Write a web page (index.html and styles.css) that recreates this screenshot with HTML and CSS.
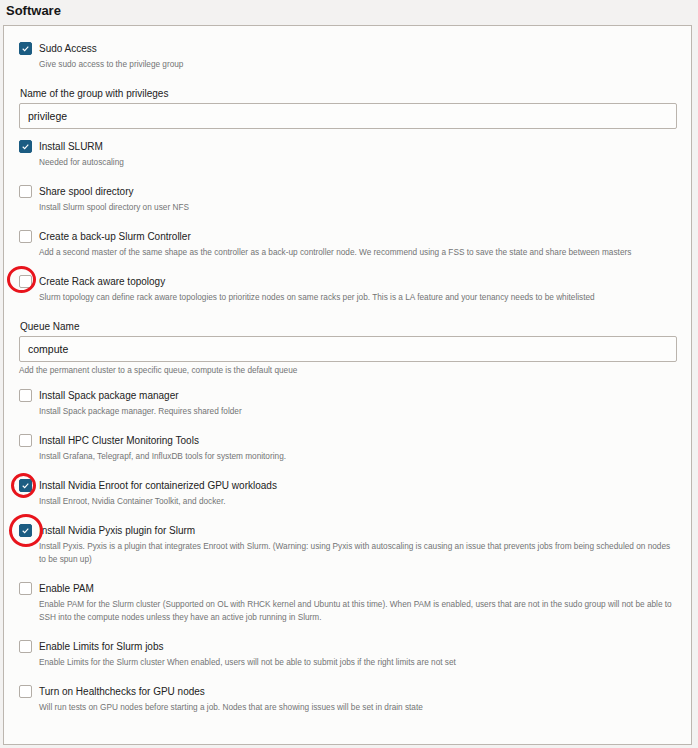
FILE: index.html
```html
<!DOCTYPE html>
<html>
<head>
    <title>Software</title>
    <link rel="stylesheet" href="styles.css">
</head>
<body>
    <div class="page">
        <h2 class="section-title">Software</h2>

        <div class="panel">
            <div class="check-item">
                <div class="check-row">
                    <span class="box checked"><svg viewBox="0 0 13 13"><polyline points="3.2,6.8 5.5,9 9.8,4.2"/></svg></span>
                    <span class="check-label">Sudo Access</span>
                </div>
                <p class="hint">Give sudo access to the privilege group</p>
            </div>

            <div class="field">
                <label class="field-label">Name of the group with privileges</label>
                <div class="text-input">privilege</div>
            </div>

            <div class="check-item">
                <div class="check-row">
                    <span class="box checked"><svg viewBox="0 0 13 13"><polyline points="3.2,6.8 5.5,9 9.8,4.2"/></svg></span>
                    <span class="check-label">Install SLURM</span>
                </div>
                <p class="hint">Needed for autoscaling</p>
            </div>

            <div class="check-item">
                <div class="check-row">
                    <span class="box"></span>
                    <span class="check-label">Share spool directory</span>
                </div>
                <p class="hint">Install Slurm spool directory on user NFS</p>
            </div>

            <div class="check-item">
                <div class="check-row">
                    <span class="box"></span>
                    <span class="check-label">Create a back-up Slurm Controller</span>
                </div>
                <p class="hint">Add a second master of the same shape as the controller as a back-up controller node. We recommend using a FSS to save the state and share between masters</p>
            </div>

            <div class="check-item">
                <div class="check-row">
                    <span class="box"></span>
                    <span class="mark mark-rack"></span>
                    <span class="check-label">Create Rack aware topology</span>
                </div>
                <p class="hint">Slurm topology can define rack aware topologies to prioritize nodes on same racks per job. This is a LA feature and your tenancy needs to be whitelisted</p>
            </div>

            <div class="field">
                <label class="field-label">Queue Name</label>
                <div class="text-input">compute</div>
                <p class="field-hint">Add the permanent cluster to a specific queue, compute is the default queue</p>
            </div>

            <div class="check-item">
                <div class="check-row">
                    <span class="box"></span>
                    <span class="check-label">Install Spack package manager</span>
                </div>
                <p class="hint">Install Spack package manager. Requires shared folder</p>
            </div>

            <div class="check-item">
                <div class="check-row">
                    <span class="box"></span>
                    <span class="check-label">Install HPC Cluster Monitoring Tools</span>
                </div>
                <p class="hint">Install Grafana, Telegrapf, and InfluxDB tools for system monitoring.</p>
            </div>

            <div class="check-item">
                <div class="check-row">
                    <span class="box checked"><svg viewBox="0 0 13 13"><polyline points="3.2,6.8 5.5,9 9.8,4.2"/></svg></span>
                    <span class="mark mark-enroot"></span>
                    <span class="check-label">Install Nvidia Enroot for containerized GPU workloads</span>
                </div>
                <p class="hint">Install Enroot, Nvidia Container Toolkit, and docker.</p>
            </div>

            <div class="check-item">
                <div class="check-row">
                    <span class="box checked"><svg viewBox="0 0 13 13"><polyline points="3.2,6.8 5.5,9 9.8,4.2"/></svg></span>
                    <span class="mark mark-pyxis"></span>
                    <span class="check-label">Install Nvidia Pyxis plugin for Slurm</span>
                </div>
                <p class="hint">Install Pyxis. Pyxis is a plugin that integrates Enroot with Slurm. (Warning: using Pyxis with autoscaling is causing an issue that prevents jobs from being scheduled on nodes to be spun up)</p>
            </div>

            <div class="check-item">
                <div class="check-row">
                    <span class="box"></span>
                    <span class="check-label">Enable PAM</span>
                </div>
                <p class="hint">Enable PAM for the Slurm cluster (Supported on OL with RHCK kernel and Ubuntu at this time). When PAM is enabled, users that are not in the sudo group will not be able to SSH into the compute nodes unless they have an active job running in Slurm.</p>
            </div>

            <div class="check-item">
                <div class="check-row">
                    <span class="box"></span>
                    <span class="check-label">Enable Limits for Slurm jobs</span>
                </div>
                <p class="hint">Enable Limits for the Slurm cluster When enabled, users will not be able to submit jobs if the right limits are not set</p>
            </div>

            <div class="check-item">
                <div class="check-row">
                    <span class="box"></span>
                    <span class="check-label">Turn on Healthchecks for GPU nodes</span>
                </div>
                <p class="hint">Will run tests on GPU nodes before starting a job. Nodes that are showing issues will be set in drain state</p>
            </div>
        </div>
    </div>
</body>
</html>
```

FILE: styles.css
```css
* {
    margin: 0;
    padding: 0;
    box-sizing: border-box;
    font-family: 'Liberation Sans', Arial, sans-serif;
}

body {
    background: #f3f2f1;
    color: #262626;
}

.page {
    padding: 0 6px 0 3px;
}

.section-title {
    font-size: 13px;
    font-weight: 700;
    color: #161616;
    height: 25px;
    line-height: 22px;
    padding-left: 3px;
}

.panel {
    background: #fcfcfb;
    border: 1px solid #bcb6af;
    padding: 15px 14px 30px 15px;
    display: flex;
    flex-direction: column;
}

.check-item {
    margin-bottom: 15px;
}

.check-item:last-child {
    margin-bottom: 0;
}

.check-row {
    position: relative;
    display: flex;
    align-items: center;
    height: 15px;
}

.box {
    width: 13px;
    height: 13px;
    border: 1px solid #b3ada6;
    border-radius: 2px;
    background: #fff;
    margin-right: 7px;
    flex-shrink: 0;
}

.box svg {
    display: block;
    width: 11px;
    height: 11px;
}

.box polyline {
    fill: none;
    stroke: #fff;
    stroke-width: 1.3;
}

.box.checked {
    background: #1b5c82;
    border-color: #1b5c82;
}

.check-label {
    font-size: 10px;
    color: #222;
}

.hint {
    margin-top: 2px;
    padding-left: 20px;
    font-size: 8.25px;
    line-height: 13px;
    color: #737475;
}

.field {
    margin-bottom: 10px;
}

.field-label {
    display: block;
    font-size: 10px;
    line-height: 16px;
    color: #222;
    margin-left: 1px;
}

.text-input {
    margin-top: 1px;
    height: 26px;
    line-height: 24px;
    border: 1px solid #bab4ad;
    border-radius: 2px;
    background: #fdfdfc;
    padding-left: 8px;
    font-size: 10.5px;
    color: #161616;
}

.field-hint {
    margin-top: 2px;
    margin-bottom: 1px;
    font-size: 8.25px;
    line-height: 13px;
    color: #737475;
}

/* red review marks drawn over the checkboxes */
.mark {
    position: absolute;
    border: 3.5px solid #e8141c;
    border-radius: 50%;
}

.mark-rack {
    left: -12px;
    top: -8px;
    width: 29px;
    height: 27px;
}

.mark-enroot {
    left: -8px;
    top: -5px;
    width: 25px;
    height: 25px;
}

.mark-pyxis {
    left: -10px;
    top: -9px;
    width: 34px;
    height: 33px;
}
```
